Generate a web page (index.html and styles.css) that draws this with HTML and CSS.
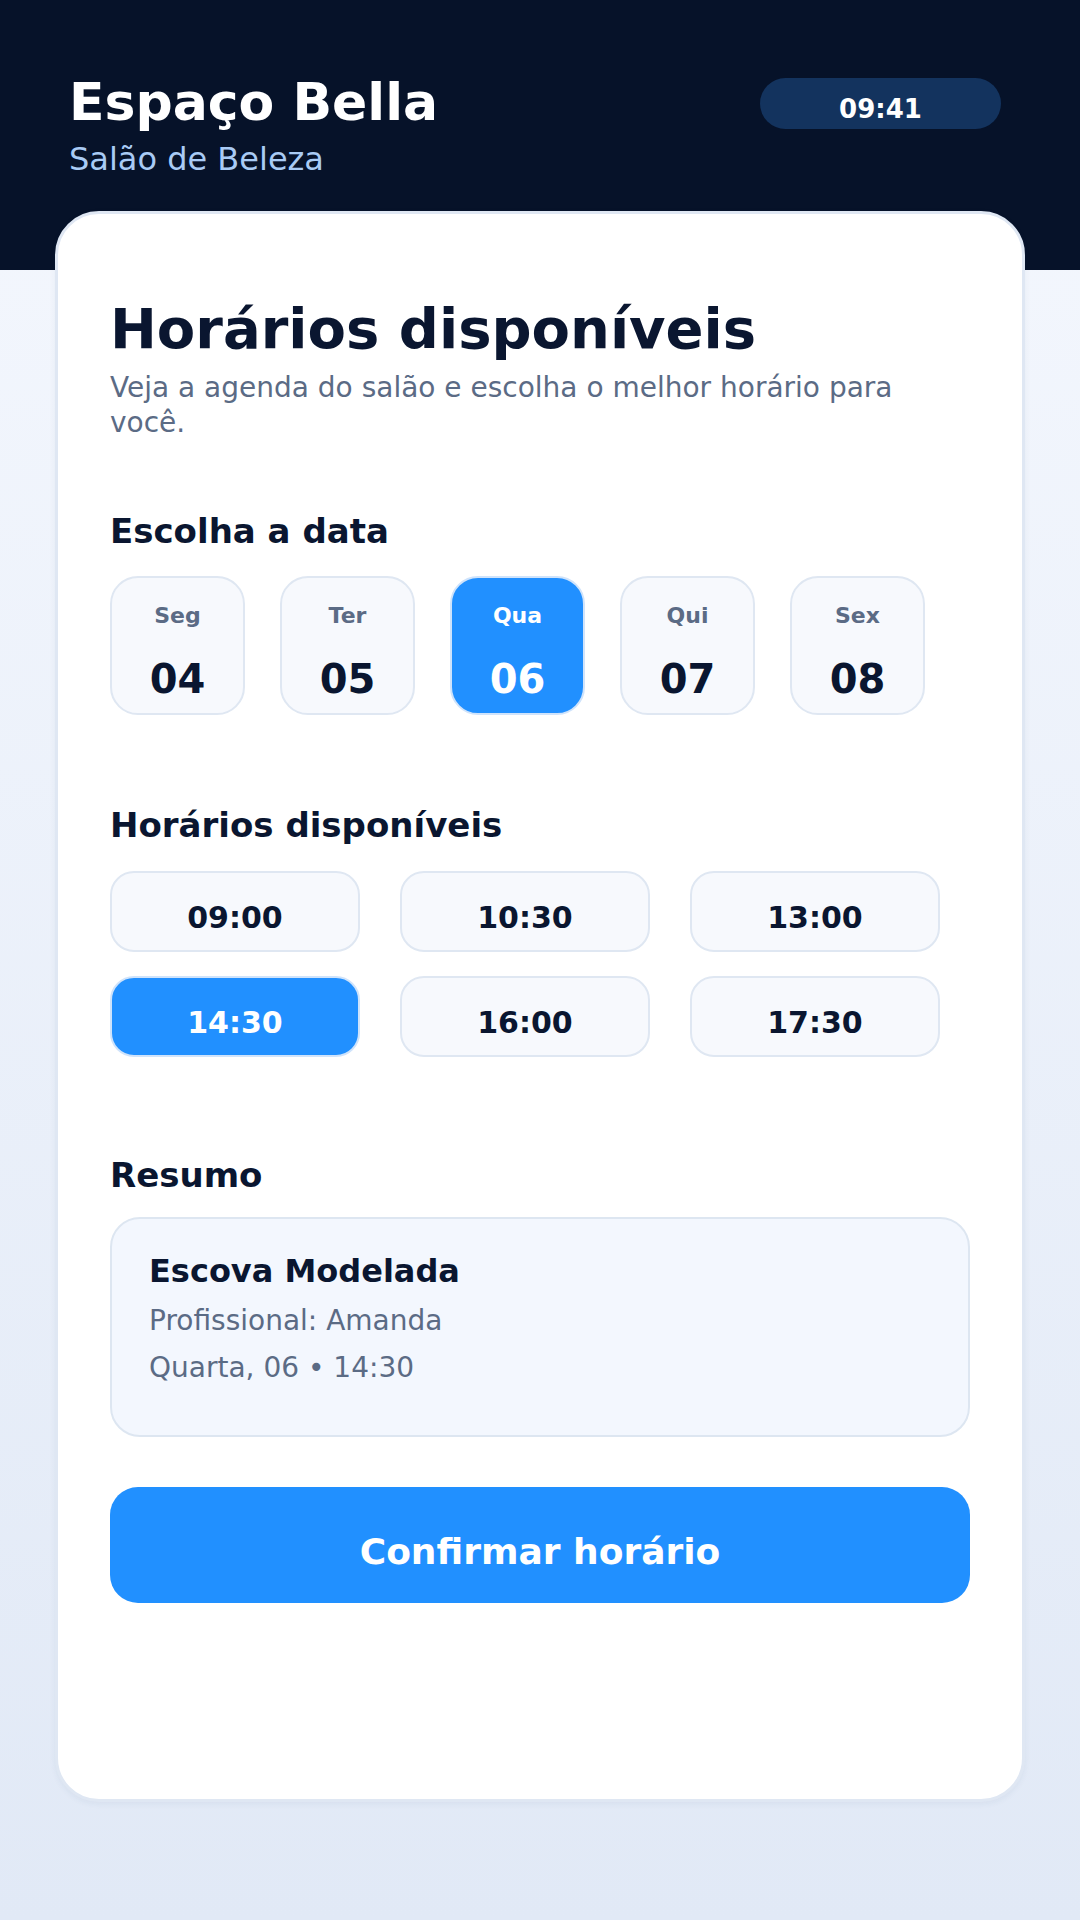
FILE: index.html
```html
<!DOCTYPE html>
<html lang="pt-BR">
<head>
<meta charset="utf-8">
<title>Espaço Bella</title>
<link rel="stylesheet" href="styles.css">
</head>
<body>
<div class="page">
  <header class="topbar">
    <div class="brand">
      <div class="brand-name">Espaço Bella</div>
      <div class="brand-sub">Salão de Beleza</div>
    </div>
    <div class="clock">09:41</div>
  </header>

  <main class="card">
    <h1 class="title">Horários disponíveis</h1>
    <p class="lead">Veja a agenda do salão e escolha o melhor horário para você.</p>

    <h2 class="section-title first">Escolha a data</h2>
    <div class="days">
      <div class="day"><span class="day-label">Seg</span><span class="day-num">04</span></div>
      <div class="day"><span class="day-label">Ter</span><span class="day-num">05</span></div>
      <div class="day active"><span class="day-label">Qua</span><span class="day-num">06</span></div>
      <div class="day"><span class="day-label">Qui</span><span class="day-num">07</span></div>
      <div class="day"><span class="day-label">Sex</span><span class="day-num">08</span></div>
    </div>

    <h2 class="section-title times-title">Horários disponíveis</h2>
    <div class="slots">
      <div class="slot">09:00</div>
      <div class="slot">10:30</div>
      <div class="slot">13:00</div>
      <div class="slot active">14:30</div>
      <div class="slot">16:00</div>
      <div class="slot">17:30</div>
    </div>

    <h2 class="section-title summary-title">Resumo</h2>
    <div class="summary">
      <div class="summary-service">Escova Modelada</div>
      <div class="summary-line">Profissional: Amanda</div>
      <div class="summary-line">Quarta, 06 • 14:30</div>
    </div>

    <button class="confirm">Confirmar horário</button>
  </main>
</div>
</body>
</html>
```

FILE: styles.css
```css
* {
  box-sizing: border-box;
}

html, body {
  margin: 0;
  padding: 0;
}

body {
  width: 1080px;
  min-height: 1920px;
  font-family: "DejaVu Sans", "Noto Sans", sans-serif;
  background: linear-gradient(180deg, #f5f8fe 0%, #e1e9f6 100%);
  color: #0a1630;
}

.page {
  min-height: 1920px;
}

.topbar {
  height: 270px;
  background: #061229;
  display: flex;
  justify-content: space-between;
  align-items: flex-start;
  padding: 72px 79px 0 69px;
}

.brand-name {
  font-size: 52px;
  font-weight: 700;
  line-height: 60px;
  color: #ffffff;
}

.brand-sub {
  margin-top: 7px;
  font-size: 32px;
  line-height: 40px;
  color: #a9cbf5;
}

.clock {
  margin-top: 6px;
  width: 241px;
  height: 51px;
  border-radius: 26px;
  background: #13335e;
  color: #ffffff;
  font-size: 26px;
  font-weight: 700;
  line-height: 40px;
  padding-top: 11px;
  text-align: center;
}

.card {
  display: block;
  margin: -59px 55px 0;
  height: 1591px;
  background: #ffffff;
  border: 3px solid #dfe7f3;
  border-radius: 44px;
  padding: 83px 52px 0;
  box-shadow: 0 2px 6px rgba(30, 60, 110, 0.06);
}

.title {
  margin: 0;
  font-size: 56px;
  font-weight: 700;
  line-height: 64px;
  color: #0a1630;
}

.lead {
  margin: 9px 0 0;
  max-width: 800px;
  font-size: 28px;
  line-height: 35px;
  color: #5b6b85;
}

.section-title {
  margin: 0;
  font-size: 34px;
  font-weight: 700;
  line-height: 40px;
  color: #0a1630;
}

.section-title.first {
  margin-top: 71px;
}

.section-title.times-title {
  margin-top: 90px;
}

.section-title.summary-title {
  margin-top: 98px;
}

.days {
  margin-top: 25px;
  display: flex;
  gap: 35px;
}

.day {
  width: 135px;
  height: 139px;
  border: 2px solid #dfe7f2;
  border-radius: 28px;
  background: #f7f9fd;
  display: flex;
  flex-direction: column;
  align-items: center;
  padding-top: 24px;
}

.day-label {
  font-size: 22px;
  font-weight: 700;
  line-height: 28px;
  color: #5b6b85;
}

.day-num {
  margin-top: 25px;
  font-size: 40px;
  font-weight: 700;
  line-height: 48px;
  color: #0a1630;
}

.day.active {
  background: #2190ff;
  border-color: #cfe3fb;
}

.day.active .day-label,
.day.active .day-num {
  color: #ffffff;
}

.slots {
  margin-top: 26px;
  display: grid;
  grid-template-columns: repeat(3, 250px);
  column-gap: 40px;
  row-gap: 24px;
}

.slot {
  height: 81px;
  border: 2px solid #dfe7f2;
  border-radius: 24px;
  background: #f7f9fd;
  padding: 14px 0 1px;
  font-size: 30px;
  font-weight: 700;
  line-height: 62px;
  text-align: center;
  color: #0a1630;
}

.slot.active {
  background: #2190ff;
  border-color: #cfe3fb;
  color: #ffffff;
}

.summary {
  margin-top: 22px;
  height: 220px;
  border: 2px solid #dde6f1;
  border-radius: 30px;
  background: #f3f7fe;
  padding: 32px 37px 0;
}

.summary-service {
  font-size: 32px;
  font-weight: 700;
  line-height: 40px;
  color: #0a1630;
}

.summary-service + .summary-line {
  margin-top: 6px;
}

.summary-line {
  font-size: 28px;
  line-height: 47px;
  color: #5b6b85;
}

.confirm {
  display: block;
  margin-top: 50px;
  width: 100%;
  height: 116px;
  border: none;
  border-radius: 28px;
  background: #2190ff;
  color: #ffffff;
  font-family: "DejaVu Sans", "Noto Sans", sans-serif;
  font-size: 36px;
  font-weight: 700;
  line-height: 103px;
  padding: 13px 0 0;
  text-align: center;
}
```
